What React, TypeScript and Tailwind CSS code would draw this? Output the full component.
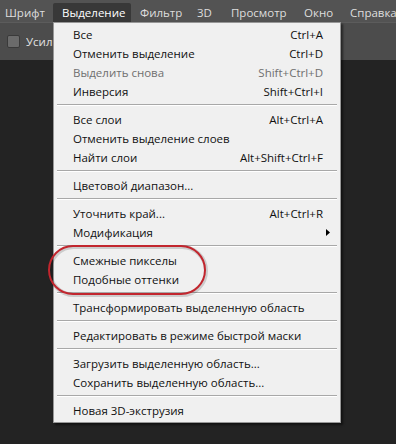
const menuBar = [
  { label: 'Шрифт', w: 'w-[57px]' },
  { label: 'Выделение', w: 'w-[78px]', active: true },
  { label: 'Фильтр', w: 'w-[57px]' },
  { label: '3D', w: 'w-[34px]' },
  { label: 'Просмотр', w: 'w-[73px]' },
  { label: 'Окно', w: 'w-[46px]' },
  { label: 'Справка', w: 'w-[55px]' },
];

type Item = { label: string; shortcut?: string; disabled?: boolean; submenu?: boolean };

const groups: Item[][] = [
  [
    { label: 'Все', shortcut: 'Ctrl+A' },
    { label: 'Отменить выделение', shortcut: 'Ctrl+D' },
    { label: 'Выделить снова', shortcut: 'Shift+Ctrl+D', disabled: true },
    { label: 'Инверсия', shortcut: 'Shift+Ctrl+I' },
  ],
  [
    { label: 'Все слои', shortcut: 'Alt+Ctrl+A' },
    { label: 'Отменить выделение слоев' },
    { label: 'Найти слои', shortcut: 'Alt+Shift+Ctrl+F' },
  ],
  [{ label: 'Цветовой диапазон...' }],
  [
    { label: 'Уточнить край...', shortcut: 'Alt+Ctrl+R' },
    { label: 'Модификация', submenu: true },
  ],
  [{ label: 'Смежные пикселы' }, { label: 'Подобные оттенки' }],
  [{ label: 'Трансформировать выделенную область' }],
  [{ label: 'Редактировать в режиме быстрой маски' }],
  [{ label: 'Загрузить выделенную область...' }, { label: 'Сохранить выделенную область...' }],
  [{ label: 'Новая 3D-экструзия' }],
];

const MenuRow = ({ item }: { item: Item }) => (
  <div
    className={`relative flex h-[19px] items-center justify-between pl-[19px] pr-[17px] ${
      item.disabled ? 'text-[#6f6f6f]' : 'text-[#111]'
    }`}
  >
    <span>{item.label}</span>
    {item.shortcut && <span>{item.shortcut}</span>}
    {item.submenu && (
      <svg className="absolute right-[10px] top-[6px]" width="4" height="7" viewBox="0 0 4 7">
        <path d="M0 0 L4 3.5 L0 7 Z" fill="#000" />
      </svg>
    )}
  </div>
);

export default function App() {
  return (
    <div
      className="relative flex h-[444px] w-[396px] flex-col overflow-hidden bg-[#232323] text-[11.5px]"
      style={{ fontFamily: '"Open Sans", "Noto Sans", sans-serif' }}
    >
      {/* menu bar */}
      <div className="flex h-[22px] shrink-0 items-end bg-[#535353] text-[#dedede]">
        <div className="-ml-[4px] flex h-[19px]">
          {menuBar.map((m) => (
            <div
              key={m.label}
              className={`${m.w} flex shrink-0 items-center whitespace-nowrap pl-[9px] leading-none ${
                m.active ? 'rounded-t-[2px] bg-[#383838] text-white' : ''
              }`}
            >
              {m.label}
            </div>
          ))}
        </div>
      </div>

      {/* options bar */}
      <div className="flex h-[38px] shrink-0 items-center gap-[6px] border-t border-[#5c5c5c] bg-[#4c4c4c] pl-[7px] text-[#e2e2e2]">
        <div className="h-[13px] w-[13px] shrink-0 rounded-[2px] border border-[#3a3a3a] bg-[#6b6b6b]" />
        <span className="w-[27px] overflow-hidden whitespace-nowrap">Усилить</span>
      </div>

      <div className="flex-1 bg-[#232323]" />

      {/* dropdown */}
      <div className="absolute left-[53px] top-[22px] w-[288px] border border-[#979797] bg-[#f0f0f0] pb-[2px] pt-[2px] shadow-[2px_2px_2px_rgba(0,0,0,0.5)]">
        {groups.map((g, gi) => (
          <div key={gi}>
            {gi > 0 && (
              <div className="h-[9px] px-[3px] pt-[3px]">
                <div className="h-px bg-[#a8a8a8]" />
                <div className="h-px bg-white" />
              </div>
            )}
            {g.map((item) => (
              <MenuRow key={item.label} item={item} />
            ))}
          </div>
        ))}
      </div>

      {/* red annotation */}
      <svg className="pointer-events-none absolute left-0 top-0" width="396" height="444">
        <rect x="50" y="247" width="156" height="48" rx="24" ry="24" fill="none" stroke="rgba(0,0,0,0.15)" strokeWidth="4" />
        <rect x="49" y="246" width="156" height="48" rx="24" ry="24" fill="none" stroke="#c2262e" strokeWidth="2" />
      </svg>
    </div>
  );
}
